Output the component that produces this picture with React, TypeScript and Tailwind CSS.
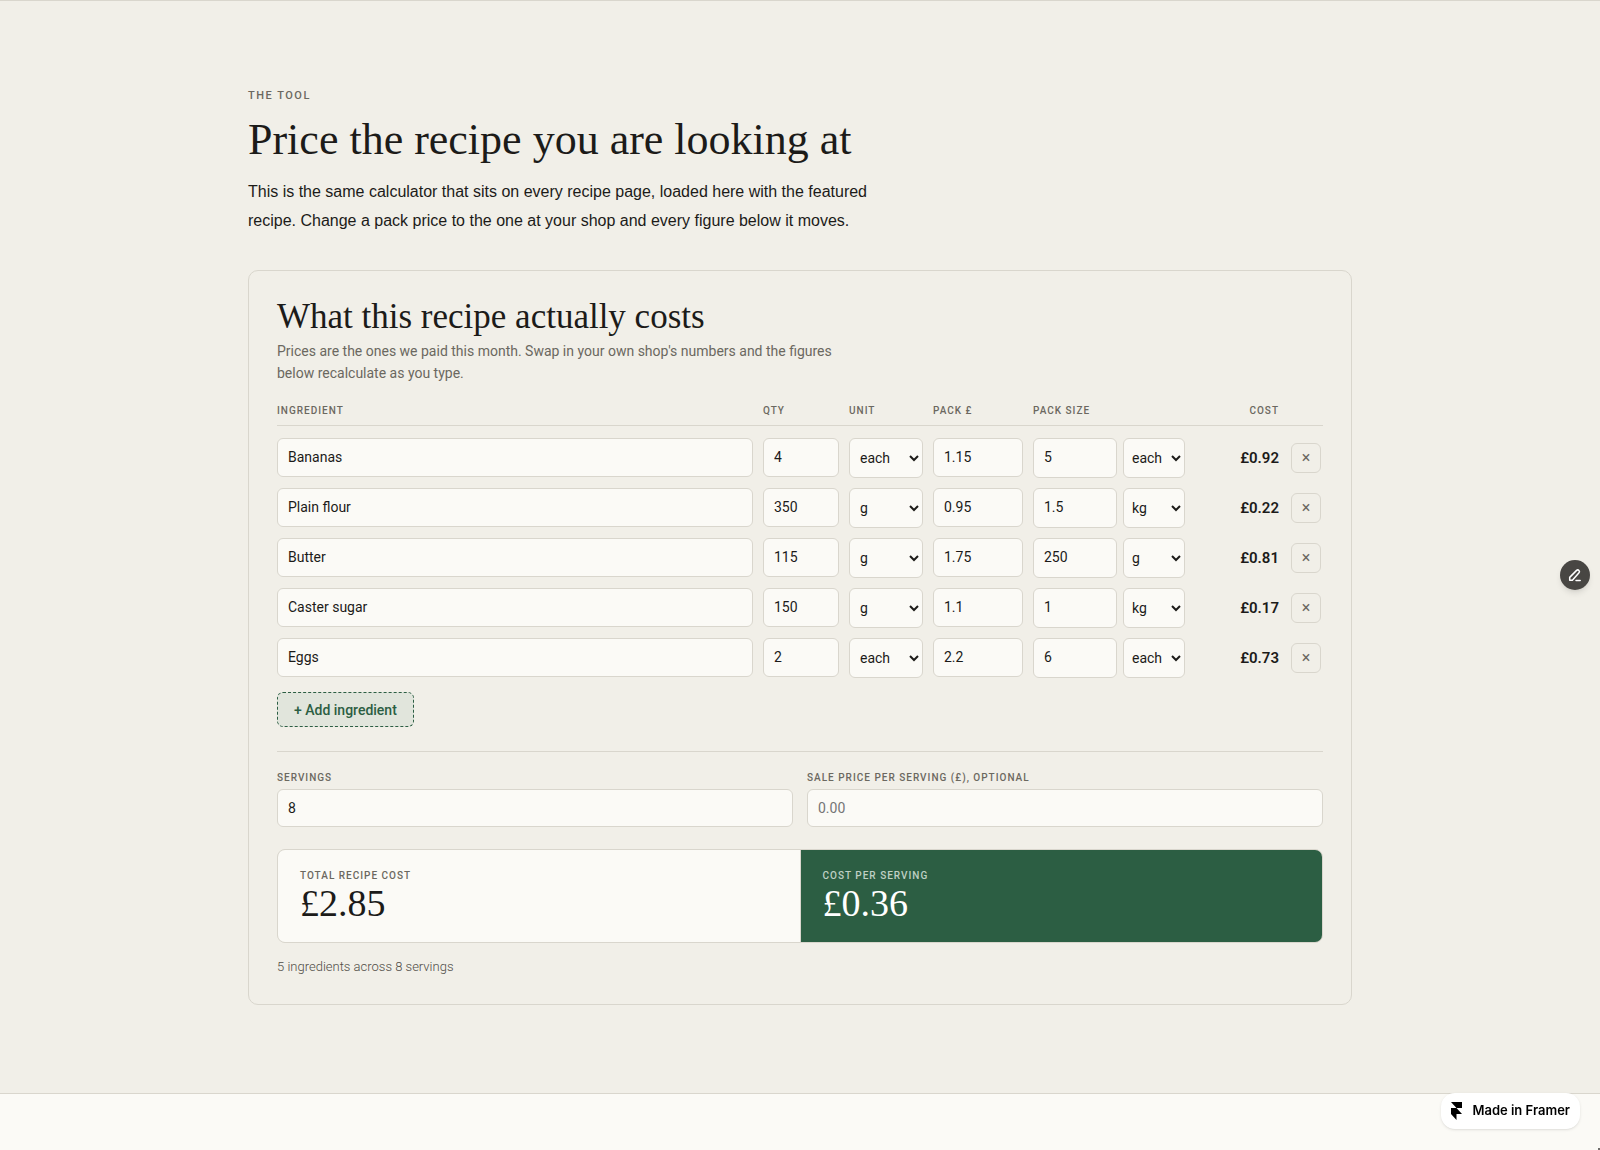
import { useState } from "react";

type Unit = "each" | "g" | "kg";

interface Ingredient {
  id: number;
  name: string;
  qty: string;
  unit: Unit;
  price: string;
  size: string;
  sizeUnit: Unit;
}

const UNITS: Unit[] = ["each", "g", "kg"];

const STARTING: Ingredient[] = [
  { id: 1, name: "Bananas", qty: "4", unit: "each", price: "1.15", size: "5", sizeUnit: "each" },
  { id: 2, name: "Plain flour", qty: "350", unit: "g", price: "0.95", size: "1.5", sizeUnit: "kg" },
  { id: 3, name: "Butter", qty: "115", unit: "g", price: "1.75", size: "250", sizeUnit: "g" },
  { id: 4, name: "Caster sugar", qty: "150", unit: "g", price: "1.1", size: "1", sizeUnit: "kg" },
  { id: 5, name: "Eggs", qty: "2", unit: "each", price: "2.2", size: "6", sizeUnit: "each" },
];

const FIELD =
  "block w-full min-w-0 rounded-md border border-[#d9d6cd] bg-[#fbfaf6] px-2.5 text-sm text-[#1c1b19] placeholder:text-[#757575]";
const ROW_FIELD = "h-[39px] pb-0.5";
const LABEL = "text-[10px] leading-4 font-medium tracking-[1px] uppercase";

function amount(value: string, unit: Unit) {
  const n = parseFloat(value) || 0;
  return unit === "kg" ? n * 1000 : n;
}

function costOf(item: Ingredient) {
  const size = amount(item.size, item.sizeUnit);
  return size > 0 ? (amount(item.qty, item.unit) / size) * (parseFloat(item.price) || 0) : 0;
}

function UnitSelect(props: { label: string; value: Unit; wide?: boolean; onChange: (u: Unit) => void }) {
  return (
    <select
      aria-label={props.label}
      value={props.value}
      onChange={(e) => props.onChange(e.target.value as Unit)}
      className={`h-10 w-full min-w-0 rounded-md border border-[#d9d6cd] bg-[#fbfaf6] text-sm text-[#1c1b19] ${
        props.wide ? "pl-1.5" : "pl-1"
      }`}
    >
      {UNITS.map((u) => (
        <option key={u} value={u}>
          {u}
        </option>
      ))}
    </select>
  );
}

function Result(props: { label: string; value: number; accent?: boolean }) {
  return (
    <div className={`px-[22px] pt-[18px] pb-5 ${props.accent ? "bg-[#2c5e43] text-white" : "bg-[#fbfaf6]"}`}>
      <p className={`${LABEL} ${props.accent ? "text-[#bfd0c4]" : "text-[#6b6860]"}`}>{props.label}</p>
      <p className="font-['Liberation_Serif',serif] text-[38px] leading-[38px]">£{props.value.toFixed(2)}</p>
    </div>
  );
}

function Calculator() {
  const [items, setItems] = useState(STARTING);
  const [servings, setServings] = useState("8");
  const [sale, setSale] = useState("");

  const update = (id: number, patch: Partial<Ingredient>) =>
    setItems((list) => list.map((i) => (i.id === id ? { ...i, ...patch } : i)));
  const total = items.reduce((sum, i) => sum + costOf(i), 0);
  const count = parseFloat(servings) || 1;

  return (
    <div className="mt-[35px] rounded-[10px] border border-[#d9d6cd] px-7 pt-7 pb-[27px]">
      <h3 className="font-['Liberation_Serif',serif] text-[35px] leading-9">What this recipe actually costs</h3>
      <p className="mt-[5px] max-w-[580px] text-sm leading-[22px] text-[#6b6860]">
        Prices are the ones we paid this month. Swap in your own shop's numbers and the figures below recalculate as
        you type.
      </p>

      <table className="mt-[19px] w-full table-fixed border-separate border-spacing-0">
        <colgroup>
          <col />
          <col className="w-[86px]" />
          <col className="w-[84px]" />
          <col className="w-[100px]" />
          <col className="w-[162px]" />
          <col className="w-[84px]" />
          <col className="w-11" />
        </colgroup>
        <thead>
          <tr className="text-left text-[#6b6860]">
            {["Ingredient", "Qty", "Unit", "Pack £", "Pack size"].map((h) => (
              <th key={h} className={`${LABEL} border-b border-[#d9d6cd] pb-1.5`}>
                {h}
              </th>
            ))}
            <th className={`${LABEL} border-b border-[#d9d6cd] pb-1.5 text-right`}>Cost</th>
            <th className="border-b border-[#d9d6cd]" aria-label="Remove" />
          </tr>
        </thead>
        <tbody className="before:block before:h-0.5">
          {items.map((item) => (
            <tr key={item.id} className="align-top">
              <td className="pt-2.5 pr-2.5">
                <input
                  aria-label="Ingredient"
                  className={`${FIELD} ${ROW_FIELD}`}
                  value={item.name}
                  onChange={(e) => update(item.id, { name: e.target.value })}
                />
              </td>
              <td className="pt-2.5 pr-2.5">
                <input
                  aria-label="Quantity"
                  className={`${FIELD} ${ROW_FIELD}`}
                  value={item.qty}
                  onChange={(e) => update(item.id, { qty: e.target.value })}
                />
              </td>
              <td className="pt-2.5 pr-2.5">
                <UnitSelect wide label="Unit" value={item.unit} onChange={(unit) => update(item.id, { unit })} />
              </td>
              <td className="pt-2.5 pr-2.5">
                <input
                  aria-label="Pack price"
                  className={`${FIELD} ${ROW_FIELD}`}
                  value={item.price}
                  onChange={(e) => update(item.id, { price: e.target.value })}
                />
              </td>
              <td className="pt-2.5 pr-2.5">
                <div className="grid grid-cols-[84px_62px] gap-1.5">
                  <input
                    aria-label="Pack size"
                    className={`${FIELD} h-10 pb-0.5`}
                    value={item.size}
                    onChange={(e) => update(item.id, { size: e.target.value })}
                  />
                  <UnitSelect
                    label="Pack unit"
                    value={item.sizeUnit}
                    onChange={(sizeUnit) => update(item.id, { sizeUnit })}
                  />
                </div>
              </td>
              <td className="pt-2.5 text-right align-middle text-[15px] font-semibold">£{costOf(item).toFixed(2)}</td>
              <td className="pt-2.5 pl-3 align-middle">
                <button
                  type="button"
                  aria-label={`Remove ${item.name}`}
                  onClick={() => setItems((list) => list.filter((i) => i.id !== item.id))}
                  className="block size-[30px] rounded-md border border-[#d9d6cd] text-base text-[#6b6860]"
                >
                  ×
                </button>
              </td>
            </tr>
          ))}
        </tbody>
      </table>

      <button
        type="button"
        onClick={() =>
          setItems((list) => [
            ...list,
            { id: Date.now(), name: "", qty: "", unit: "g", price: "", size: "", sizeUnit: "g" },
          ])
        }
        className="mt-3.5 block h-[35px] rounded-md border border-dashed border-[#2c5e43] bg-[#e1e5dc] px-4 text-sm font-medium text-[#2c5e43]"
      >
        + Add ingredient
      </button>

      <div className="mt-6 grid grid-cols-2 gap-3.5 border-t border-[#d9d6cd] pt-[18px]">
        <label className={`${LABEL} text-[#6b6860]`}>
          Servings
          <input
            className={`${FIELD} mt-[3px] h-[38px] font-normal tracking-normal`}
            value={servings}
            onChange={(e) => setServings(e.target.value)}
          />
        </label>
        <label className={`${LABEL} text-[#6b6860]`}>
          Sale price per serving (£), optional
          <input
            className={`${FIELD} mt-[3px] h-[38px] font-normal tracking-normal`}
            placeholder="0.00"
            value={sale}
            onChange={(e) => setSale(e.target.value)}
          />
        </label>
      </div>

      <div className="mt-[22px] grid grid-cols-2 gap-px overflow-hidden rounded-lg border border-[#d9d6cd] bg-[#d9d6cd]">
        <Result label="Total recipe cost" value={total} />
        <Result label="Cost per serving" value={total / count} accent />
      </div>
      <p className="mt-3.5 text-[13px] leading-5 font-light text-[#4f4c46]">
        {items.length} ingredients across {servings} servings
      </p>
    </div>
  );
}

export default function App() {
  return (
    <div className="min-h-screen overflow-x-hidden bg-[#fbfaf6] font-['Roboto',sans-serif] text-[#1c1b19]">
      <section className="border-y border-[#d9d6cd] bg-[#f1efe8] px-6 pt-[87px] pb-[88px]">
        <div className="mx-auto max-w-[1104px]">
          <p className="text-[11px] leading-4 font-medium tracking-[1.5px] text-[#6b6860] uppercase">The tool</p>
          <h2 className="mt-3 font-['Liberation_Serif',serif] text-[44px] leading-[48px]">
            Price the recipe you are looking at
          </h2>
          <p className="mt-[13px] max-w-[660px] font-['Liberation_Sans',sans-serif] text-base leading-[29px]">
            This is the same calculator that sits on every recipe page, loaded here with the featured recipe. Change a
            pack price to the one at your shop and every figure below it moves.
          </p>
          <Calculator />
        </div>
      </section>

      <button
        type="button"
        aria-label="Edit content"
        className="fixed top-[560px] right-2.5 flex size-[30px] items-center justify-center rounded-full bg-[#484643] text-white shadow-md"
      >
        <svg viewBox="0 0 14 14" className="size-3.5" fill="none" stroke="currentColor" strokeWidth="1.5">
          <path d="M1.7 12.2V9.4L8.6 2.4a1.7 1.7 0 0 1 2.4 2.4L4.4 12.2Z" strokeLinejoin="round" />
          <path d="M8 12.4h4.2" strokeLinecap="round" />
        </svg>
      </button>

      <a
        href="#framer"
        className="fixed right-5 bottom-[21px] flex h-9 items-center gap-2.5 rounded-[14px] bg-white px-2.5 font-['Inter',sans-serif] text-[13px] font-semibold text-black shadow"
      >
        <svg viewBox="0 0 11 18" className="h-[18px] w-[11px]" fill="currentColor">
          <path d="M0 0h11v6H5.5ZM0 6h5.5l5.5 6H0ZM0 12h5.5v6Z" />
        </svg>
        Made in Framer
      </a>
      <span className="fixed right-0 bottom-0 size-0.5 bg-[#6f6e6c]" />
    </div>
  );
}
